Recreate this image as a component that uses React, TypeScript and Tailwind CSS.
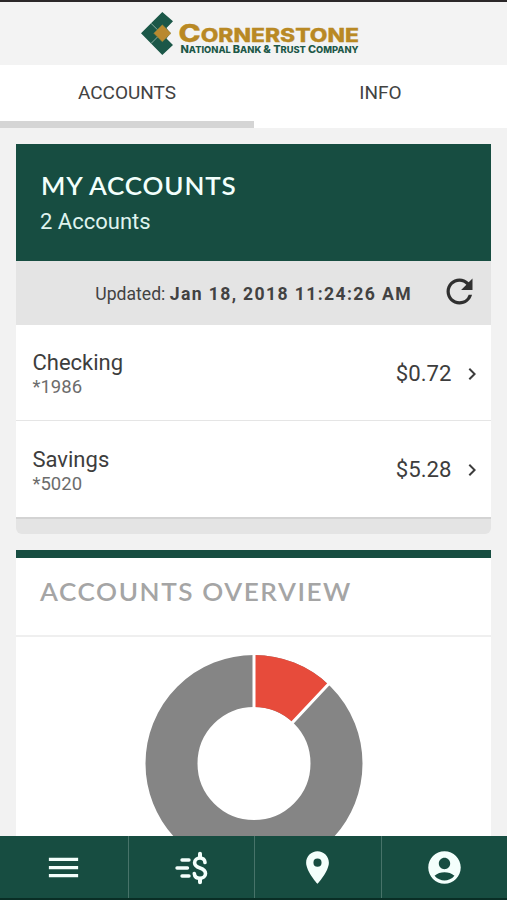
import { MdAccountCircle, MdChevronRight, MdMenu, MdPlace, MdRefresh } from 'react-icons/md'

interface AccountRowProps {
  name: string
  number: string
  balance: string
}

const accounts: AccountRowProps[] = [
  { name: 'Checking', number: '*1986', balance: '$0.72' },
  { name: 'Savings', number: '*5020', balance: '$5.28' },
]

const Logo = () => {
  return (
    <svg className="ml-[140px] mt-1 h-[50px] w-[224px]" viewBox="140 6 224 50">
      <path d="M162.3 12L173 21.3L166.5 28L170 33.3L166.5 38.5L173 45L162.3 55L141 33.3Z" fill="#1b5748" />
      <path d="M151 23.3L157.5 29.8M151 43.5L157.5 37" stroke="#a9c4b8" strokeWidth="0.8" />
      <path
        d="M162.3 24.8L171 33.3L162.3 41.8L153.8 33.3Z"
        fill="#b9892f"
        stroke="#8d8540"
        strokeWidth="0.5"
      />
      <text
        x="178.5"
        y="41.7"
        textLength="180.5"
        lengthAdjust="spacingAndGlyphs"
        fill="#b98924"
        stroke="#b98924"
        strokeWidth="0.3"
        className="font-['Inter'] text-[18.4px] font-extrabold"
      >
        <tspan className="text-[24px]">C</tspan>ORNERSTONE
      </text>
      <text
        x="180.5"
        y="52.6"
        textLength="178"
        lengthAdjust="spacingAndGlyphs"
        fill="#1d5848"
        className="font-['Inter'] text-[9px] font-extrabold"
      >
        <tspan className="text-[10.6px]">N</tspan>ATIONAL <tspan className="text-[10.6px]">B</tspan>ANK{' '}
        <tspan className="text-[10.6px]">&amp; T</tspan>RUST <tspan className="text-[10.6px]">C</tspan>OMPANY
      </text>
    </svg>
  )
}

const Tabs = () => {
  return (
    <div className="grid h-[63px] shrink-0 grid-cols-[254px_253px] bg-white text-center text-[19px] leading-[56px] text-[#424242]">
      <div className="border-b-[7px] border-[#d5d5d5]">ACCOUNTS</div>
      <div>INFO</div>
    </div>
  )
}

const AccountRow = (props: AccountRowProps) => {
  return (
    <div className="flex h-24 items-center pl-[16.5px] pr-[7.5px] pt-[2px] text-[#3d3d3d]">
      <div className="grow pt-[2px]">
        <p className="text-[22px] leading-[26px]">{props.name}</p>
        <p className="text-[18.5px] leading-[23px] text-[#6c6c6c]">{props.number}</p>
      </div>
      <p className="text-[22.2px]">{props.balance}</p>
      <MdChevronRight className="ml-2 size-6" />
    </div>
  )
}

const MyAccounts = () => {
  return (
    <section className="mx-4 mt-4 shrink-0">
      <div className="h-[117px] bg-[#174d41] pl-[25px] pt-[25px] text-[#f2fffc]">
        <h2 className="origin-left scale-x-[1.04] font-['Lato'] text-[25px] font-semibold leading-8 tracking-[0.8px]">
          MY ACCOUNTS
        </h2>
        <p className="-ml-px mt-[5px] text-[22px] leading-8 text-[#dff3ee]">2 Accounts</p>
      </div>
      <div className="flex h-16 items-center justify-end bg-[#e4e4e4] pr-3 text-[#424242]">
        <p className="mt-[2px] whitespace-pre text-[17.6px]">
          Updated: <b className="tracking-[1.38px]">Jan 18, 2018 11:24:26 AM</b>
        </p>
        <MdRefresh className="-mt-1 ml-[28px] size-[39px] text-[#303030]" />
      </div>
      <div className="divide-y divide-[#e5e5e5] bg-white">
        {accounts.map((account) => (
          <AccountRow key={account.number} {...account} />
        ))}
      </div>
      <div className="h-[17px] rounded-b-md border-t-2 border-[#d3d3d3] bg-[#e4e4e4]" />
    </section>
  )
}

const Donut = () => {
  return (
    <svg className="mx-auto mt-[18px] size-[218px]" viewBox="-109 -108.5 218 218">
      <circle r="82.5" fill="none" stroke="#858585" strokeWidth="52" />
      <path d="M0-108.5A108.5 108.5 0 0 1 74.3-79.1L38.7-41.2A56.5 56.5 0 0 0 0-56.5Z" fill="#e74b3b" />
      <path d="M0-110V-55M75.3-80.2L37.7-40.1" stroke="#fff" strokeWidth="3" />
    </svg>
  )
}

const Overview = () => {
  return (
    <section className="mx-4 mt-4 min-h-0 grow overflow-hidden border-t-8 border-[#174d41] bg-white">
      <div className="h-[79px] border-b-2 border-[#efefef] pl-6 pt-[17px]">
        <h2 className="origin-left scale-x-[1.045] font-['Lato'] text-[25px] font-semibold leading-8 tracking-[1.5px] text-[#a5a5a5]">
          ACCOUNTS OVERVIEW
        </h2>
      </div>
      <Donut />
    </section>
  )
}

const TransferIcon = () => {
  return (
    <svg className="mt-px h-[34px] w-[36px]" viewBox="0 0 36 34" fill="none" stroke="currentColor" strokeLinecap="round">
      <path d="M9 9H16M4 17H14.5M9 25H16" strokeWidth="3.4" />
      <path
        d="M32 11.5C31.7 8.5 29.8 7 27 7C24 7 21.6 8.8 21.6 11.7C21.6 14.6 23.6 15.8 27 17C30.5 18.2 32.5 19.6 32.5 22.5C32.5 25.4 30 27.3 27 27.3C23.8 27.3 21.6 25.5 21.3 22.5"
        strokeWidth="3.6"
      />
      <path d="M27 2.8V6M27 28V31.3" strokeWidth="4" />
    </svg>
  )
}

const BottomNav = () => {
  return (
    <nav className="grid h-16 shrink-0 grid-cols-[128.5px_126.5px_126.5px_125.5px] border-b-2 border-[#092e25] bg-[#174d41] text-[#f4fffc] *:flex *:items-center *:justify-center">
      <div className="border-r border-[#477369]">
        <MdMenu className="size-[39px]" />
      </div>
      <div className="border-r border-[#477369]">
        <TransferIcon />
      </div>
      <div className="border-r border-[#477369]">
        <MdPlace className="size-[39px]" />
      </div>
      <div>
        <MdAccountCircle className="size-[39px]" />
      </div>
    </nav>
  )
}

export default function App() {
  return (
    <div className="flex h-[900px] w-[507px] flex-col overflow-hidden bg-[#f2f2f2] font-['Roboto',sans-serif]">
      <header className="h-[65px] shrink-0 border-t-2 border-[#2b2729] bg-[#f3f3f3]">
        <Logo />
      </header>
      <Tabs />
      <MyAccounts />
      <Overview />
      <BottomNav />
    </div>
  )
}
